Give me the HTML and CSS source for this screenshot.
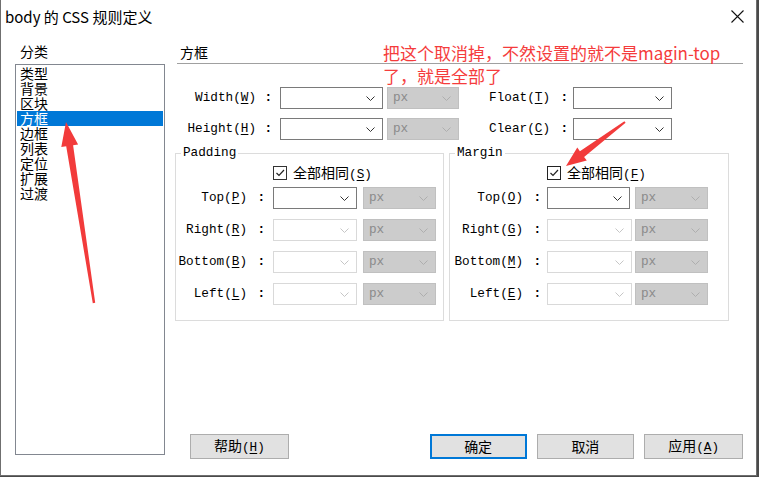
FILE: index.html
```html
<!DOCTYPE html>
<html lang="zh-CN">
<head>
<meta charset="utf-8">
<title>body 的 CSS 规则定义</title>
<link rel="stylesheet" href="styles.css">
</head>
<body>
<div class="window">
  <div class="titlebar">
    <span class="title">body 的 CSS 规则定义</span>
    <svg class="close" width="13" height="13" viewBox="0 0 13 13"><path d="M0.5 0.5 L12.5 12.5 M12.5 0.5 L0.5 12.5" stroke="#111" stroke-width="1.1" fill="none"/></svg>
  </div>
  <div class="content">
    <div class="left">
      <div class="cat-label">分类</div>
      <ul class="catlist">
        <li>类型</li>
        <li>背景</li>
        <li>区块</li>
        <li class="sel">方框</li>
        <li>边框</li>
        <li>列表</li>
        <li>定位</li>
        <li>扩展</li>
        <li>过渡</li>
      </ul>
    </div>
    <div class="right">
      <div class="panel-title">方框</div>
      <div class="top-rows">
        <div class="row">
          <span class="lbl mono w-lbl1">Width(<u>W</u>)</span><span class="colon c1">:</span>
          <span class="sel-box on w103"><svg class="chev" width="9" height="5" viewBox="0 0 9 5"><path d="M0.5 0.5 L4.5 4.5 L8.5 0.5"/></svg></span>
          <span class="sel-box unit w72 ml4"><span class="unit-text mono">px</span><svg class="chev" width="9" height="5" viewBox="0 0 9 5"><path d="M0.5 0.5 L4.5 4.5 L8.5 0.5"/></svg></span>
          <span class="lbl mono w-lbl2">Float(<u>T</u>)</span><span class="colon c2">:</span>
          <span class="sel-box on w99"><svg class="chev" width="9" height="5" viewBox="0 0 9 5"><path d="M0.5 0.5 L4.5 4.5 L8.5 0.5"/></svg></span>
        </div>
        <div class="row">
          <span class="lbl mono w-lbl1">Height(<u>H</u>)</span><span class="colon c1">:</span>
          <span class="sel-box on w103"><svg class="chev" width="9" height="5" viewBox="0 0 9 5"><path d="M0.5 0.5 L4.5 4.5 L8.5 0.5"/></svg></span>
          <span class="sel-box unit w72 ml4"><span class="unit-text mono">px</span><svg class="chev" width="9" height="5" viewBox="0 0 9 5"><path d="M0.5 0.5 L4.5 4.5 L8.5 0.5"/></svg></span>
          <span class="lbl mono w-lbl2">Clear(<u>C</u>)</span><span class="colon c2">:</span>
          <span class="sel-box on w99"><svg class="chev" width="9" height="5" viewBox="0 0 9 5"><path d="M0.5 0.5 L4.5 4.5 L8.5 0.5"/></svg></span>
        </div>
      </div>
      <div class="boxes">
        <div class="box pad">
          <span class="legend mono">Padding</span>
          <div class="check-row">
            <span class="checkbox"><svg width="12" height="12" viewBox="0 0 12 12"><path d="M2.5 6 L5 8.5 L10 3" stroke="#222" stroke-width="1.2" fill="none"/></svg></span>
            <span class="check-text">全部相同<span class="mono">(<u>S</u>)</span></span>
          </div>
          <div class="box-rows">
            <div class="row">
              <span class="lbl mono pl">Top(<u>P</u>)</span><span class="colon cp">:</span>
              <span class="sel-box on w84"><svg class="chev" width="9" height="5" viewBox="0 0 9 5"><path d="M0.5 0.5 L4.5 4.5 L8.5 0.5"/></svg></span>
              <span class="sel-box unit w73 ml6"><span class="unit-text mono">px</span><svg class="chev" width="9" height="5" viewBox="0 0 9 5"><path d="M0.5 0.5 L4.5 4.5 L8.5 0.5"/></svg></span>
            </div>
            <div class="row">
              <span class="lbl mono pl">Right(<u>R</u>)</span><span class="colon cp">:</span>
              <span class="sel-box off w84"><svg class="chev" width="9" height="5" viewBox="0 0 9 5"><path d="M0.5 0.5 L4.5 4.5 L8.5 0.5"/></svg></span>
              <span class="sel-box unit w73 ml6"><span class="unit-text mono">px</span><svg class="chev" width="9" height="5" viewBox="0 0 9 5"><path d="M0.5 0.5 L4.5 4.5 L8.5 0.5"/></svg></span>
            </div>
            <div class="row">
              <span class="lbl mono pl">Bottom(<u>B</u>)</span><span class="colon cp">:</span>
              <span class="sel-box off w84"><svg class="chev" width="9" height="5" viewBox="0 0 9 5"><path d="M0.5 0.5 L4.5 4.5 L8.5 0.5"/></svg></span>
              <span class="sel-box unit w73 ml6"><span class="unit-text mono">px</span><svg class="chev" width="9" height="5" viewBox="0 0 9 5"><path d="M0.5 0.5 L4.5 4.5 L8.5 0.5"/></svg></span>
            </div>
            <div class="row">
              <span class="lbl mono pl">Left(<u>L</u>)</span><span class="colon cp">:</span>
              <span class="sel-box off w84"><svg class="chev" width="9" height="5" viewBox="0 0 9 5"><path d="M0.5 0.5 L4.5 4.5 L8.5 0.5"/></svg></span>
              <span class="sel-box unit w73 ml6"><span class="unit-text mono">px</span><svg class="chev" width="9" height="5" viewBox="0 0 9 5"><path d="M0.5 0.5 L4.5 4.5 L8.5 0.5"/></svg></span>
            </div>
          </div>
        </div>
        <div class="box mar">
          <span class="legend mono">Margin</span>
          <div class="check-row">
            <span class="checkbox dark"><svg width="12" height="12" viewBox="0 0 12 12"><path d="M2.5 6 L5 8.5 L10 3" stroke="#222" stroke-width="1.2" fill="none"/></svg></span>
            <span class="check-text">全部相同<span class="mono">(<u>F</u>)</span></span>
          </div>
          <div class="box-rows">
            <div class="row">
              <span class="lbl mono ml-l">Top(<u>O</u>)</span><span class="colon cm">:</span>
              <span class="sel-box on w83"><svg class="chev" width="9" height="5" viewBox="0 0 9 5"><path d="M0.5 0.5 L4.5 4.5 L8.5 0.5"/></svg></span>
              <span class="sel-box unit w73 ml5"><span class="unit-text mono">px</span><svg class="chev" width="9" height="5" viewBox="0 0 9 5"><path d="M0.5 0.5 L4.5 4.5 L8.5 0.5"/></svg></span>
            </div>
            <div class="row">
              <span class="lbl mono ml-l">Right(<u>G</u>)</span><span class="colon cm">:</span>
              <span class="sel-box off w85"><svg class="chev" width="9" height="5" viewBox="0 0 9 5"><path d="M0.5 0.5 L4.5 4.5 L8.5 0.5"/></svg></span>
              <span class="sel-box unit w73 ml3"><span class="unit-text mono">px</span><svg class="chev" width="9" height="5" viewBox="0 0 9 5"><path d="M0.5 0.5 L4.5 4.5 L8.5 0.5"/></svg></span>
            </div>
            <div class="row">
              <span class="lbl mono ml-l">Bottom(<u>M</u>)</span><span class="colon cm">:</span>
              <span class="sel-box off w85"><svg class="chev" width="9" height="5" viewBox="0 0 9 5"><path d="M0.5 0.5 L4.5 4.5 L8.5 0.5"/></svg></span>
              <span class="sel-box unit w73 ml3"><span class="unit-text mono">px</span><svg class="chev" width="9" height="5" viewBox="0 0 9 5"><path d="M0.5 0.5 L4.5 4.5 L8.5 0.5"/></svg></span>
            </div>
            <div class="row">
              <span class="lbl mono ml-l">Left(<u>E</u>)</span><span class="colon cm">:</span>
              <span class="sel-box off w85"><svg class="chev" width="9" height="5" viewBox="0 0 9 5"><path d="M0.5 0.5 L4.5 4.5 L8.5 0.5"/></svg></span>
              <span class="sel-box unit w73 ml3"><span class="unit-text mono">px</span><svg class="chev" width="9" height="5" viewBox="0 0 9 5"><path d="M0.5 0.5 L4.5 4.5 L8.5 0.5"/></svg></span>
            </div>
          </div>
        </div>
      </div>
      <div class="buttons">
        <button class="btn b-help">帮助<span class="mono">(<u>H</u>)</span></button>
        <button class="btn primary b-ok">确定</button>
        <button class="btn b-cancel">取消</button>
        <button class="btn b-apply">应用<span class="mono">(<u>A</u>)</span></button>
      </div>
    </div>
  </div>
  <div class="note">把这个取消掉，不然设置的就不是magin-top<br>了，就是全部了</div>
  <svg class="arrows" width="757" height="476" viewBox="0 0 757 476">
    <polygon fill="#f23b3b" points="95.2,302.8 73.1,145.2 78.1,144.4 66,122 61.3,147.0 66.2,146.3 92.8,303.2"/>
    <polygon fill="#f23b3b" points="625.6,122.8 584.1,156.9 586.8,160.5 566,166 577.3,147.6 579.9,151.2 624.4,121.2"/>
  </svg>
</div>
</body>
</html>
```

FILE: styles.css
```css
* { box-sizing: border-box; }

body {
  margin: 0;
  width: 759px;
  height: 477px;
  overflow: hidden;
  background: #4a4a4a;
  font-family: "Noto Sans CJK SC", "Liberation Sans", sans-serif;
  color: #000;
}

.window {
  position: relative;
  width: 757px;
  height: 476px;
  background: #fff;
  border: 1px solid #6f6f6f;
  border-top: none;
  display: flex;
  flex-direction: column;
}

.mono {
  font-family: "Liberation Mono", "Noto Sans CJK SC", monospace;
  font-size: 12.7px;
}

u { text-underline-offset: 2px; }

/* Title bar */
.titlebar {
  height: 34px;
  flex: none;
  display: flex;
  align-items: center;
  justify-content: space-between;
  padding: 0 12px 0 4px;
}
.title {
  font-size: 15px;
  line-height: 20px;
  margin-top: -1px;
}
.close { display: block; margin-top: -1px; }

/* Content */
.content {
  display: flex;
  padding: 9px 0 0 14px;
}

.left { width: 150px; flex: none; }
.cat-label {
  height: 21px;
  padding: 1px 0 0 5px;
  font-size: 14px;
  line-height: 15px;
}
.catlist {
  list-style: none;
  margin: 0;
  padding: 1px;
  width: 150px;
  height: 391px;
  border: 1px solid #828790;
}
.catlist li {
  height: 15px;
  line-height: 15px;
  font-size: 14px;
  padding-left: 3px;
  white-space: nowrap;
}
.catlist li.sel {
  background: #0078d7;
  color: #fff;
}

.right {
  width: 566px;
  margin-left: 12px;
  flex: none;
}
.panel-title {
  height: 21px;
  padding: 2px 0 0 3px;
  font-size: 14px;
  line-height: 15px;
  border-bottom: 1px solid #a0a0a0;
}

.top-rows {
  margin-top: 23px;
  display: flex;
  flex-direction: column;
  gap: 9px;
}
.row {
  display: flex;
  align-items: center;
  height: 22px;
}
.lbl {
  text-align: right;
  white-space: nowrap;
  line-height: 22px;
  flex: none;
}
.colon {
  flex: none;
  text-align: right;
  font-family: "Liberation Mono", monospace;
  font-size: 12.7px;
  font-weight: bold;
  line-height: 22px;
}
.w-lbl1 { width: 79px; }
.c1 { width: 24px; padding-right: 8px; }
.w-lbl2 { width: 91px; }
.c2 { width: 23px; padding-right: 5px; }

.sel-box {
  height: 22px;
  flex: none;
  display: flex;
  align-items: center;
  justify-content: flex-end;
  padding-right: 7px;
  background: #fff;
}
.sel-box.on { border: 1px solid #7a7a7a; }
.sel-box.on .chev path { stroke: #333; }
.sel-box.off { border: 1px solid #d9d9d9; }
.sel-box.off .chev path { stroke: #c6c6c6; }
.sel-box.unit {
  background: #cccccc;
  border: 1px solid #c0c0c0;
  justify-content: space-between;
  padding-left: 5px;
}
.sel-box.unit .chev path { stroke: #aeaeae; }
.chev { display: block; }
.chev path { fill: none; stroke-width: 1; }
.unit-text { color: #8a8a8a; line-height: 20px; }

.w103 { width: 103px; }
.w99 { width: 99px; }
.w72 { width: 72px; }
.w73 { width: 73px; }
.w83 { width: 83px; }
.w84 { width: 84px; }
.w85 { width: 85px; }
.ml3 { margin-left: 3px; }
.ml4 { margin-left: 4px; }
.ml5 { margin-left: 5px; }
.ml6 { margin-left: 6px; }

/* Fieldset boxes */
.boxes {
  display: flex;
  gap: 5px;
  margin: 13px 0 0 -2px;
}
.box {
  height: 168px;
  border: 1px solid #dcdcdc;
  display: flex;
  flex-direction: column;
  align-items: flex-start;
}
.box.pad { width: 269px; }
.box.mar { width: 280px; }
.legend {
  display: block;
  margin: -8px 0 0 5px;
  padding: 0 2px;
  background: #fff;
  line-height: 14px;
  height: 14px;
}
.check-row {
  margin-top: 6px;
  padding-left: 97px;
  display: flex;
  align-items: center;
  height: 14px;
}
.checkbox {
  width: 14px;
  height: 14px;
  border: 1px solid #333;
  display: flex;
  align-items: center;
  justify-content: center;
  background: #fff;
}
.checkbox.dark { border-color: #222; }
.check-text {
  margin-left: 6px;
  font-size: 14px;
  line-height: 14px;
  white-space: nowrap;
}
.box-rows {
  margin-top: 7px;
  display: flex;
  flex-direction: column;
  gap: 10px;
}
.pl { width: 71px; }
.cp { width: 26px; padding-right: 8px; }
.ml-l { width: 73px; }
.cm { width: 24px; padding-right: 6px; }

/* Buttons */
.buttons {
  display: flex;
  margin-top: 113px;
  padding-left: 13px;
}
.btn {
  height: 25px;
  background: #e1e1e1;
  border: 1px solid #adadad;
  font-family: "Noto Sans CJK SC", sans-serif;
  font-size: 14px;
  line-height: 20px;
  padding: 0 0 2px;
  color: #000;
  white-space: nowrap;
}
.btn.primary { border: 2px solid #0078d7; }
.b-help { width: 99px; }
.b-ok { width: 97px; margin-left: 141px; }
.b-cancel { width: 98px; margin-left: 10px; }
.b-apply { width: 99px; margin-left: 10px; }

/* Annotation overlay */
.note {
  position: absolute;
  left: 382px;
  top: 41px;
  font-size: 17px;
  line-height: 23px;
  color: #f53c3c;
  white-space: nowrap;
}
.arrows {
  position: absolute;
  left: -1px;
  top: 0;
  pointer-events: none;
}
```
